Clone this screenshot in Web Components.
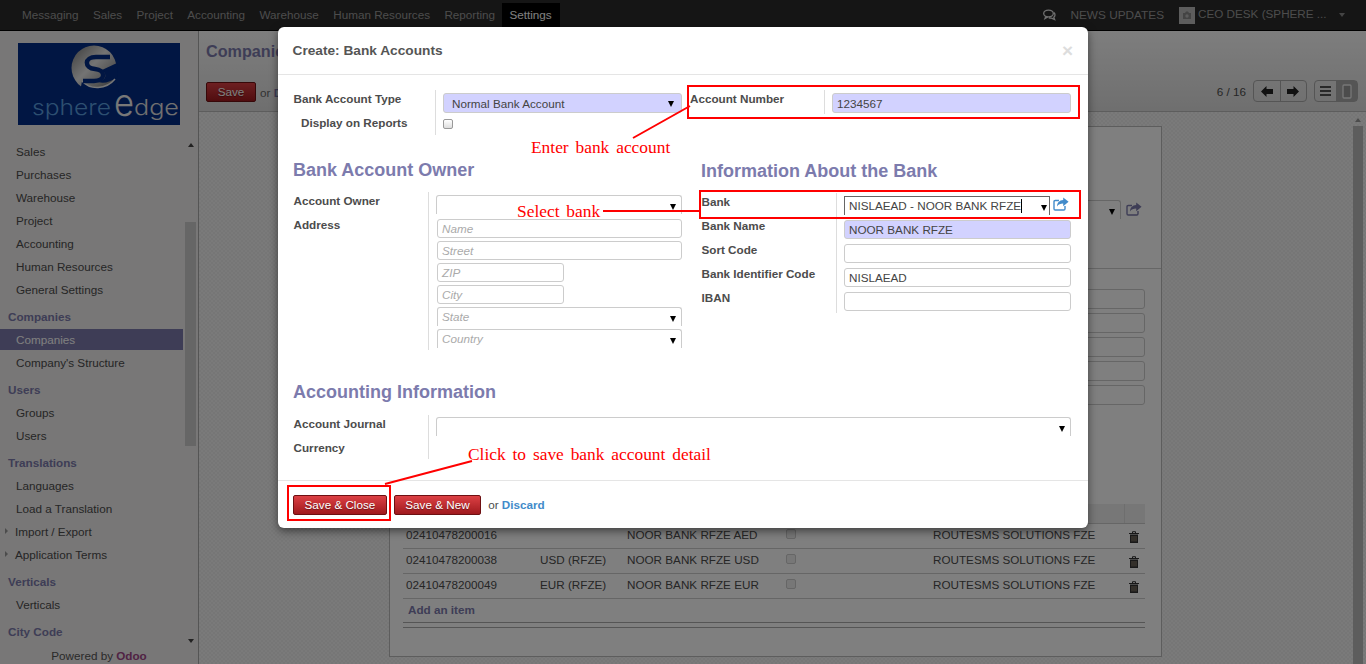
<!DOCTYPE html>
<html lang="en">
<head>
<meta charset="utf-8">
<title>Create: Bank Accounts</title>
<style>
  html, body { margin: 0; height: 664px; overflow: hidden; }
  body { font: 11.7px/16px "Liberation Sans", Arial, sans-serif; color: #4c4c4c; }
  .below { display: flex; height: 633px; }
</style>
</head>
<body>
<top-nav>
  <nav-link>Messaging</nav-link><nav-link>Sales</nav-link><nav-link>Project</nav-link><nav-link>Accounting</nav-link><nav-link>Warehouse</nav-link><nav-link>Human Resources</nav-link><nav-link>Reporting</nav-link><nav-link active>Settings</nav-link>
</top-nav>
<div class="below">
  <side-bar>
    <menu-item>Sales</menu-item>
    <menu-item>Purchases</menu-item>
    <menu-item>Warehouse</menu-item>
    <menu-item>Project</menu-item>
    <menu-item>Accounting</menu-item>
    <menu-item>Human Resources</menu-item>
    <menu-item>General Settings</menu-item>
    <menu-item head>Companies</menu-item>
    <menu-item active>Companies</menu-item>
    <menu-item>Company's Structure</menu-item>
    <menu-item head>Users</menu-item>
    <menu-item>Groups</menu-item>
    <menu-item>Users</menu-item>
    <menu-item head>Translations</menu-item>
    <menu-item>Languages</menu-item>
    <menu-item>Load a Translation</menu-item>
    <menu-item sub>Import / Export</menu-item>
    <menu-item sub>Application Terms</menu-item>
    <menu-item head>Verticals</menu-item>
    <menu-item>Verticals</menu-item>
    <menu-item head>City Code</menu-item>
  </side-bar>
  <main-view>
    <form-sheet>
      <bank-line><span>02410478200016</span><span></span><span>NOOR BANK RFZE AED</span><i></i><span>ROUTESMS SOLUTIONS FZE</span></bank-line>
      <bank-line><span>02410478200038</span><span>USD (RFZE)</span><span>NOOR BANK RFZE USD</span><i></i><span>ROUTESMS SOLUTIONS FZE</span></bank-line>
      <bank-line><span>02410478200049</span><span>EUR (RFZE)</span><span>NOOR BANK RFZE EUR</span><i></i><span>ROUTESMS SOLUTIONS FZE</span></bank-line>
    </form-sheet>
  </main-view>
</div>

<bank-dialog title-text="Create: Bank Accounts">
  <div style="display:flex;gap:8px;--label-w:142px;--cell-pb:1px">
    <div style="width:389px">
      <form-row label="Bank Account Type"><field-box req select style="--pad:8px;padding-top:1px;padding-right:7px">Normal Bank Account</field-box></form-row>
      <form-row label="Display on Reports" indent style="--cell-h:21px"><check-box style="margin-top:2px"></check-box></form-row>
    </div>
    <div style="width:381px;--label-w:134px;--lp:0">
      <form-row label="Account Number"><field-box req style="padding-top:1px">1234567</field-box></form-row>
    </div>
  </div>
  <div style="display:flex;gap:19px;margin-top:24px">
    <div style="width:389px;--label-w:135px">
      <form-title>Bank Account Owner</form-title>
      <form-row label="Account Owner"><field-box select open style="height:19px"></field-box></form-row>
      <form-row label="Address">
        <div style="display:flex;flex-direction:column;gap:3px;margin-left:1px">
          <field-box ph style="height:19px">Name</field-box>
          <field-box ph style="height:19px">Street</field-box>
          <field-box ph style="height:19px;width:127px">ZIP</field-box>
          <field-box ph style="height:19px;width:127px">City</field-box>
          <field-box ph select open style="height:19px">State</field-box>
          <field-box ph select open style="height:19px">Country</field-box>
        </div>
      </form-row>
    </div>
    <div style="width:370px;margin-top:1px;--label-w:135px">
      <form-title>Information About the Bank</form-title>
      <form-row label="Bank"><div style="display:flex;align-items:flex-start;gap:3px">
        <field-box select open focus caret style="height:19px;flex:1;padding-right:2px">NISLAEAD - NOOR BANK RFZE</field-box><link-icon></link-icon>
      </div></form-row>
      <form-row label="Bank Name"><field-box req style="height:19px">NOOR BANK RFZE</field-box></form-row>
      <form-row label="Sort Code"><field-box style="height:19px"></field-box></form-row>
      <form-row label="Bank Identifier Code"><field-box style="height:19px">NISLAEAD</field-box></form-row>
      <form-row label="IBAN"><field-box style="height:19px"></field-box></form-row>
    </div>
  </div>
  <div style="margin-top:31px;--label-w:135px">
    <form-title style="margin-bottom:12px">Accounting Information</form-title>
    <form-row label="Account Journal" style="--cell-pad:2px"><field-box select open style="height:19px"></field-box></form-row>
    <form-row label="Currency" style="--cell-h:20px"></form-row>
  </div>
  <red-button slot="footer">Save &amp; Close</red-button>
  <red-button slot="footer">Save &amp; New</red-button>
  <span slot="footer">or <b style="color:#428bca">Discard</b></span>
</bank-dialog>

<tour-layer>
  <note-text style="left:531px;top:138px">Enter bank account</note-text>
  <note-text style="left:517px;top:202px">Select bank</note-text>
  <note-text style="left:468px;top:445px">Click to save bank account detail</note-text>
</tour-layer>

<script>
// little helper, every element below is the same few lines otherwise
function shadowEl(name, html) {
  const template = document.createElement('template');
  template.innerHTML = html;
  customElements.define(name, class extends HTMLElement {
    constructor() {
      super();
      this.attachShadow({ mode: 'open' });
      this.shadowRoot.appendChild(template.content.cloneNode(true));
    }
  });
}

const shareIcon = (color) => `<svg width="16" height="14" viewBox="0 0 16 14" fill="none">
  <path d="M6 3.5H2.2C1.5 3.5 1 4 1 4.7v7.1c0 .7.5 1.2 1.2 1.2h8.600c.7 0 1.200-.5 1.200-1.200V9" stroke="${color}" stroke-width="1.4"/>
  <path d="M10.2 .4 15.6 4.8l-5.4 4.4V6.6c-2.8 0-4.8.7-6.2 3 0-3.800 2.400-6.200 6.200-6.500z" fill="${color}"/>
</svg>`;

shadowEl('top-nav', `<style>
  :host { display: flex; align-items: stretch; height: 31px; box-sizing: border-box; background: #2b2b2b; border-bottom: 1px solid #000; padding-left: 14.8px; color: #999; font-size: 11.7px; }
  .right { margin-left: auto; display: flex; align-items: center; }
  .news { margin: 0 15px 0 14px; font-size: 11.8px; }
  .avatar { width: 16px; height: 17px; background: #bbb; display: flex; align-items: center; justify-content: center; }
  .user { margin-left: 3px; width: 130px; white-space: nowrap; margin-top: -2px; }
  .caret { width: 0; height: 0; border: 3.500px solid transparent; border-top: 4px solid #888; border-bottom: 0; margin: 0 21px 0 11px; }
</style>
<slot></slot>
<div class="right">
  <svg width="13" height="12" viewBox="0 0 13 12" fill="none" stroke="#e0e0e0" stroke-width="1.300"><ellipse cx="5.500" cy="4.500" rx="4.800" ry="3.400"/><path d="M2.800 7.500 2 9.500 4.800 8M10.800 3.500c1.600 1.400 1.600 3.500 0 4.700l.8 2.300-3-1.400c-1 .1-2 0-2.800-.5"/></svg>
  <span class="news">NEWS UPDATES</span>
  <span class="avatar"><svg width="10" height="9" viewBox="0 0 10 9"><path d="M1 2h2l1-1.500h2L7 2h2v6H1z" fill="#888"/><circle cx="5" cy="5" r="1.700" fill="#bbb"/></svg></span>
  <span class="user">CEO DESK (SPHERE ...</span>
  <span class="caret"></span>
</div>`);

shadowEl('nav-link', `<style>
  :host { display: flex; align-items: center; padding: 0 7.2px; margin-top: 3px; padding-bottom: 3px; height: 27px; box-sizing: border-box; }
  :host([active]) { background: #000; color: #fff; padding-right: 8px; }
</style><slot></slot>`);

shadowEl('side-bar', `<style>
  :host { display: flex; flex-direction: column; width: 199px; flex: none; box-sizing: border-box; height: 633px; padding-top: 12px; background: #f0eeee; border-right: 1px solid #aaa; }
  .logo { display: block; margin-left: 18px; }
  .scroller { display: flex; flex: 1; min-height: 0; margin-top: 16px; overflow: hidden; }
  .list { width: 183px; flex: none; }
  .bar { width: 15px; display: flex; flex-direction: column; align-items: center; }
  .up, .down { width: 0; height: 0; border: 3.500px solid transparent; border-top: 0; border-bottom: 4px solid #444; }
  .up { margin-top: 2px; }
  .down { border-bottom: 0; border-top: 4px solid #444; margin-top: 193px; }
  .thumb { width: 11px; height: 224px; margin-top: 75px; background: #ccc; }
  .foot { height: 19px; text-align: center; line-height: 22px; color: #555; }
  .foot b { color: #a24689; }
</style>
<svg class="logo" width="162" height="82" viewBox="0 0 162 82">
  <defs><linearGradient id="g" x1="0" y1="0" x2="1" y2="1"><stop offset="0" stop-color="#777"/><stop offset=".45" stop-color="#e8e8e8"/><stop offset="1" stop-color="#666"/></linearGradient></defs>
  <rect width="162" height="82" fill="#022c86"/>
  <circle cx="76" cy="25" r="22.500" fill="url(#g)"/>
  <path d="M99 20 84 27c5 4 5 10-4 12 6 2 12 0 20-5z" fill="#022c86"/>
  <path d="M64 38c8 9 24 9 33-2l4 13H62z" fill="#022c86"/>
  <path d="M64 38c8 9 24 9 33-2" stroke="#eee" stroke-width="1.500" fill="none"/>
  <path d="M92 14H78c-12 0-12 11-1 12 11 1 11 12-1 12H65" stroke="#022c86" stroke-width="4.500" fill="none"/>
  <text x="14" y="72" font-family="Inter, Lato, sans-serif" font-size="22" font-weight="300" fill="#5a9ee0" textLength="79" lengthAdjust="spacingAndGlyphs">sphere</text>
  <text x="96" y="73" font-family="Inter, Lato, sans-serif" font-size="38" font-weight="300" fill="#f0f0f0" textLength="20" lengthAdjust="spacingAndGlyphs">e</text>
  <text x="116" y="72" font-family="Inter, Lato, sans-serif" font-size="22" font-weight="300" fill="#e0e0e0" textLength="45" lengthAdjust="spacingAndGlyphs">dge</text>
</svg>
<div class="scroller">
  <div class="list"><slot></slot></div>
  <div class="bar"><span class="up"></span><span class="thumb"></span><span class="down"></span></div>
</div>
<div class="foot">Powered by <b>Odoo</b></div>`);

shadowEl('menu-item', `<style>
  :host { display: flex; align-items: center; height: 21px; margin-bottom: 2px; padding-left: 16px; color: #4c4c4c; position: relative; white-space: nowrap; }
  :host([head]) { padding-left: 8px; font-weight: bold; color: #7c7bad; margin-top: 6px; }
  :host([active]) { background: #7c7bad; color: #fff; }
  :host([sub]) { padding-left: 15px; }
  .tri { display: none; width: 0; height: 0; border: 3px solid transparent; border-left: 3px solid #999; border-right: 0; position: absolute; left: 5px; top: 7px; }
  :host([sub]) .tri { display: block; }
</style><span class="tri"></span><slot></slot>`);

shadowEl('main-view', `<style>
  :host { display: flex; flex-direction: column; flex: 1; min-width: 0; }
  .head { height: 81px; box-sizing: border-box; flex: none; padding: 10px 8px 0 7px; background: linear-gradient(#fcfcfc, #dedede); border-bottom: 1px solid #bbb; }
  h1 { margin: 0; font-size: 16.200px; line-height: 20px; font-weight: bold; color: #7c7bad; }
  .actions { display: flex; align-items: flex-start; margin-top: 19px; }
  .save { margin-top: 2px; --btn-w: 50px; }
  .or { margin: 5px 0 0 4px; color: #666; }
  .or b { color: #7c7bad; }
  .pager { margin: 4px 7px 0 auto; }
  .group { display: flex; height: 22px; box-sizing: border-box; border: 1px solid #aaa; border-radius: 4px; }
  .group span { display: flex; align-items: center; justify-content: center; flex: 1; }
  .group span + span { border-left: 1px solid #aaa; }
  .nav { width: 54px; }
  .views { width: 44px; margin-left: 7px; }
  .views .on { background: #aaa; }
  .content { flex: 1; min-height: 0; display: flex; background-color: #f5f5f5; background-image: conic-gradient(#ececec 25%, transparent 0 50%, #ececec 0 75%, transparent 0); background-size: 4px 4px; }
  .bar { margin-left: auto; width: 10px; margin-right: 3px; flex: none; display: flex; flex-direction: column; align-items: center; }
  .up { width: 0; height: 0; border: 3.500px solid transparent; border-top: 0; border-bottom: 4px solid #999; margin-top: 6px; }
  .thumb { width: 10px; flex: 1; margin-top: 4px; background: #bbb; }
  .stage { padding: 14px 0 0 190px; }
</style>
<div class="head">
  <h1>Companies</h1>
  <div class="actions">
    <red-button class="save">Save</red-button>
    <span class="or">or <b>Discard</b></span>
    <span class="pager">6 / 16</span>
    <div class="group nav">
      <span><svg width="12" height="11" viewBox="0 0 12 11"><path d="M5.500 0 0 5.500 5.500 11V8H12V3H5.500z" fill="#222"/></svg></span>
      <span><svg width="12" height="11" viewBox="0 0 12 11"><path d="M6.500 0 12 5.500 6.500 11V8H0V3h6.500z" fill="#222"/></svg></span>
    </div>
    <div class="group views">
      <span><svg width="13" height="10" viewBox="0 0 13 10"><path d="M1 1h11M1 5h11M1 9h11" stroke="#222" stroke-width="1.500"/></svg></span>
      <span class="on"><svg width="10" height="15" viewBox="0 0 10 15"><rect x="1" y="1" width="8" height="13" rx="1" fill="#999" stroke="#eee" stroke-width="1.300"/></svg></span>
    </div>
  </div>
</div>
<div class="content">
  <div class="stage"><slot></slot></div>
  <div class="bar"><span class="up"></span><span class="thumb"></span></div>
</div>`);

shadowEl('form-sheet', `<style>
  :host { display: block; width: 773px; height: 531px; box-sizing: border-box; background: #fff; border: 1px solid #bbb; }
  .top { height: 142px; box-sizing: border-box; border-bottom: 1px solid #ccc; padding: 73px 19px 0 0; display: flex; justify-content: flex-end; gap: 5px; align-items: flex-start; }
  .top field-box { width: 300px; }
  .s { display: block; margin-top: 2px; }
  .inputs { display: flex; flex-direction: column; align-items: flex-end; gap: 4px; padding: 20px 16px 0 0; height: 116px; }
  .inputs field-box { width: 300px; }
  .table { margin: 99px 16px 0 13px; }
  .thead { height: 20px; box-sizing: border-box; background: #eee; display: flex; justify-content: flex-end; border-bottom: 1px solid #ccc; }
  .thead span { width: 20px; border-left: 1px solid #ddd; }
  .add { height: 23px; padding: 3px 0 0 5px; box-sizing: border-box; font-weight: bold; color: #7c7bad; line-height: 16px; }
  .foot { height: 4px; border-top: 1px solid #aaa; border-bottom: 1px solid #aaa; }
</style>
<div class="top"><field-box select open style="height:19px"></field-box><span class="s"></span></div>
<div class="inputs"><field-box></field-box><field-box></field-box><field-box></field-box><field-box></field-box><field-box></field-box></div>
<div class="table">
  <div class="thead"><span></span></div>
  <slot></slot>
  <div class="add">Add an item</div>
  <div class="foot"></div>
</div>`);

shadowEl('bank-line', `<style>
  :host { display: grid; grid-template-columns: 134px 87px 159px 147px 194px 20px; height: 25px; box-sizing: border-box; border-bottom: 1px solid #ccc; line-height: 16px; color: #4c4c4c; }
  ::slotted(span) { padding: 3px 0 0 3px; white-space: nowrap; }
  ::slotted(i) { display: block; width: 10px; height: 10px; margin: 5px 0 0 3px; border: 1px solid #ccc; border-radius: 2px; box-sizing: border-box; background: #eee; }
  svg { margin: 7px 0 0 5px; }
</style><slot></slot>
<svg width="10" height="12" viewBox="0 0 10 12"><path d="M0 2.500h10M3.500 2V.7h3V2" stroke="#333" stroke-width="1" fill="none"/><path d="M1 3.500h8V12H1z" fill="#333"/><path d="M3 5v5.500M5 5v5.500M7 5v5.500" stroke="#b9a58c" stroke-width=".8"/></svg>`);

shadowEl('red-button', `<style>
  :host { display: inline-flex; align-items: center; justify-content: center; height: 20px; box-sizing: border-box; padding: 0 10.5px; width: var(--btn-w, auto); border: 1px solid #6e1012; border-radius: 2px; background: linear-gradient(#dc4044, #a01a1e); color: #fff; text-shadow: 0 1px 1px rgba(0,0,0,.4); white-space: nowrap; }
</style><slot></slot>`);

shadowEl('bank-dialog', `<style>
  :host { display: block; position: absolute; inset: 0; background: rgba(0,0,0,.5); }
  .modal { position: absolute; left: 278px; top: 27px; width: 810px; height: 501px; display: flex; flex-direction: column; background: #fff; border-radius: 6px; box-shadow: 0 3px 9px rgba(0,0,0,.5); }
  .head { display: flex; align-items: center; justify-content: space-between; height: 48px; flex: none; box-sizing: border-box; padding: 1px 15px 0 14.500px; border-bottom: 1px solid #e5e5e5; }
  h3 { margin: 0; font-size: 13.700px; font-weight: bold; color: #555; }
  .x { font-size: 19px; font-weight: bold; color: #ddd; }
  .body { flex: 1; min-height: 0; padding: 15px 17px 0 15px; }
  .foot { height: 48px; flex: none; box-sizing: border-box; border-top: 1px solid #e5e5e5; padding: 0 15px; display: flex; align-items: center; gap: 7px; }
</style>
<div class="modal">
  <div class="head"><h3></h3><span class="x">×</span></div>
  <div class="body"><slot></slot></div>
  <div class="foot"><slot name="footer"></slot></div>
</div>`);

customElements.define('form-row', class extends HTMLElement {
  constructor() {
    super();
    this.attachShadow({ mode: 'open' });
    this.shadowRoot.innerHTML = `<style>
      :host { display: flex; }
      .label { width: var(--label-w, 135px); flex: none; box-sizing: border-box; padding-left: var(--lp, .5px); font-weight: bold; line-height: 18px; color: #4c4c4c; white-space: nowrap; }
      :host([indent]) .label { padding-left: 8px; }
      .cell { flex: 1; min-width: 0; min-height: var(--cell-h, 24px); box-sizing: border-box; border-left: 1px solid #ddd; padding: var(--cell-pad, 3px) 0 var(--cell-pb, 2px) 7px; }
    </style><div class="label"></div><div class="cell"><slot></slot></div>`;
  }
  connectedCallback() {
    this.shadowRoot.querySelector('.label').textContent = this.getAttribute('label');
  }
});

shadowEl('form-title', `<style>
  :host { display: block; font-size: 18px; line-height: 22px; font-weight: bold; color: #7c7bad; margin-bottom: 11px; white-space: nowrap; }
</style><slot></slot>`);

shadowEl('field-box', `<style>
  :host { display: flex; align-items: center; height: 20px; box-sizing: border-box; padding: 0 5px 0 var(--pad, 4px); border: 1px solid #ccc; border-radius: 3px; background: #fff; color: #444; white-space: nowrap; }
  :host([req]) { background: #d2d2ff; }
  :host([open]) { border-bottom: 0; border-radius: 3px 3px 0 0; }
  :host([focus]) { border-color: #666; border-radius: 0; }
  :host([ph]) { color: #aaa; font-style: italic; }
  .caret { display: none; width: 1px; height: 14px; background: #000; }
  :host([caret]) .caret { display: block; }
  .arrow { display: none; margin-left: auto; width: 0; height: 0; border: 3px solid transparent; border-top: 6px solid #000; border-bottom: 0; }
  :host([select]) .arrow { display: block; }
  :host([open]) .arrow { margin-top: 3px; }
</style><slot></slot><span class="caret"></span><span class="arrow"></span>`);

shadowEl('check-box', `<style>
  :host { display: block; width: 10px; height: 10px; box-sizing: border-box; border: 1px solid #999; border-radius: 2px; background: linear-gradient(#fff, #ddd); }
</style>`);

shadowEl('link-icon', `<style>:host { display: block; height: 14px; margin: 1px 2px 0 0; }</style>` + shareIcon('#428bca'));

shadowEl('tour-layer', `<style>
  :host { display: block; position: absolute; inset: 0; pointer-events: none; }
  svg { position: absolute; left: 0; top: 0; }
</style>
<svg width="1366" height="664" fill="none" stroke="#f00" stroke-width="2">
  <rect x="688" y="86" width="391" height="32"/>
  <rect x="700" y="191" width="380" height="27"/>
  <rect x="288" y="486" width="102" height="34"/>
  <path d="M633 138 690 106M603 211H700M385 484 472 461"/>
</svg>
<slot></slot>`);

shadowEl('note-text', `<style>
  :host { display: block; position: absolute; font: 17.4px/18px "Liberation Serif", "Times New Roman", serif; word-spacing: 2.5px; color: #f00; white-space: nowrap; }
</style><slot></slot>`);

// dialog title and the sheet's icon, the elements exist by now
document.querySelector('bank-dialog').shadowRoot.querySelector('h3').textContent = document.querySelector('bank-dialog').getAttribute('title-text');
document.querySelector('form-sheet').shadowRoot.querySelector('.s').innerHTML = shareIcon('#7c7bad');
</script>
</body>
</html>
